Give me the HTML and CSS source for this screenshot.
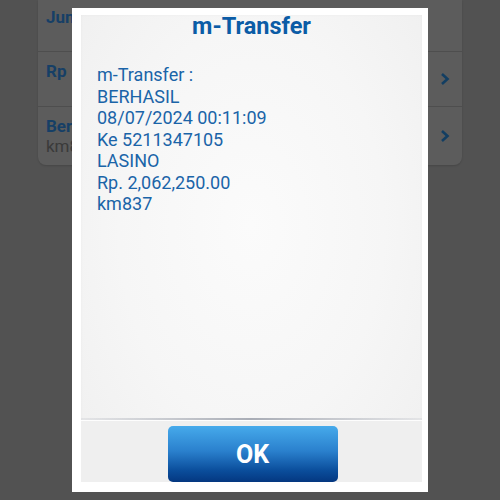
FILE: index.html
```
<!DOCTYPE html>
<html>
<head>
<meta charset="utf-8">
<link rel="stylesheet" href="styles.css">
</head>
<body>
<div class="screen">
  <div class="bg-card">
    <div class="row row-first"><span class="row-title">Jumlah</span></div>
    <div class="row"><div class="row-texts"><span class="row-title">Rp</span></div><span class="chev"><svg width="12" height="14" viewBox="0 0 12 14"><path d="M3 2 L8.5 7 L3 12" fill="none" stroke="#123e62" stroke-width="2.6"/></svg></span></div>
    <div class="row row-last"><div class="row-texts"><span class="row-title">Berita</span><span class="row-sub">km837</span></div><span class="chev"><svg width="12" height="14" viewBox="0 0 12 14"><path d="M3 2 L8.5 7 L3 12" fill="none" stroke="#123e62" stroke-width="2.6"/></svg></span></div>
  </div>
  <div class="dialog">
    <div class="panel">
      <div class="title">m-Transfer</div>
      <div class="message">
        <div>m-Transfer :</div>
        <div>BERHASIL</div>
        <div>08/07/2024 00:11:09</div>
        <div>Ke 5211347105</div>
        <div>LASINO</div>
        <div>Rp. 2,062,250.00</div>
        <div>km837</div>
      </div>
      <div class="sep"></div>
      <div class="actions"><button class="ok">OK</button></div>
    </div>
  </div>
</div>
</body>
</html>
```
FILE: styles.css
```
html, body {
  margin: 0;
  padding: 0;
  background: #525252;
  font-family: Roboto, "Noto Sans", sans-serif;
  overflow: hidden;
}
.screen {
  position: relative;
  width: 500px;
  height: 500px;
}
.bg-card {
  margin-left: 38px;
  width: 424px;
  background: #5c5c5c;
  border-radius: 0 0 8px 8px;
  box-shadow: 0 1px 2px rgba(0,0,0,0.15);
  display: flex;
  flex-direction: column;
}
.row {
  height: 55px;
  border-bottom: 1px solid #4e4e4e;
  display: flex;
  align-items: center;
  justify-content: space-between;
  padding: 0 10px 0 8px;
  box-sizing: border-box;
}
.row-first { height: 52px; padding-top: 7px; align-items: flex-start; }
.row-last { border-bottom: none; height: 58px; }
.row-texts {
  display: flex;
  flex-direction: column;
  align-self: flex-start;
  padding-top: 9px;
}
.row-title {
  color: #163f66;
  font-weight: bold;
  font-size: 17px;
  line-height: 20px;
}
.row-sub {
  color: #3a3a3a;
  font-size: 17px;
  line-height: 20px;
}
.chev { display: flex; margin-right: 1px; }
.dialog {
  position: absolute;
  left: 72px;
  top: 8px;
  width: 356px;
  height: 484px;
  box-sizing: border-box;
  background: #ffffff;
  padding: 7px 6px 10px 9px;
}
.panel {
  height: 100%;
  display: flex;
  flex-direction: column;
  background: radial-gradient(ellipse at 50% 45%, #fbfbfb 0%, #f6f6f6 55%, #efefef 100%);
  box-shadow: inset 0 0 3px rgba(0,0,0,0.04);
}
.title {
  text-align: center;
  color: #0b5ca6;
  font-weight: bold;
  font-size: 23.5px;
  line-height: 24px;
  margin-top: -1px;
}
.message {
  margin-top: 26px;
  padding-left: 16px;
  color: #1a64a8;
  font-size: 18px;
  line-height: 21.5px;
  flex: 1;
}
.sep {
  height: 2px;
  background: linear-gradient(to right, rgba(176,180,190,0.2), #a9adb6 50%, rgba(176,180,190,0.2));
  border-bottom: 1px solid #fdfdfd;
}
.actions {
  height: 61px;
  display: flex;
  justify-content: center;
  align-items: flex-end;
  background: #efefef;
}
.ok {
  width: 170px;
  height: 56px;
  margin-left: 2px;
  border: none;
  border-radius: 5px;
  background: linear-gradient(to bottom, #46aaeb 0%, #2a80cd 45%, #0a4d9b 80%, #043780 100%);
  color: #ffffff;
  font-family: Roboto, "Noto Sans", sans-serif;
  font-weight: bold;
  font-size: 25px;
  padding: 0;
}
```
